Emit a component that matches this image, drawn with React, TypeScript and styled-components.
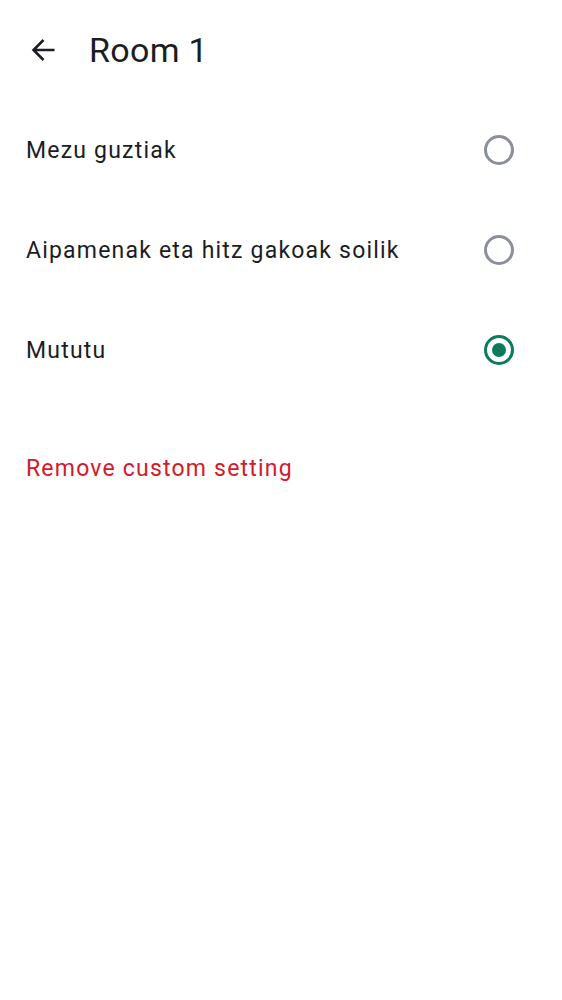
import React from "react";
import styled, { createGlobalStyle } from "styled-components";

const Global = createGlobalStyle`
  html, body { margin: 0; padding: 0; background: #ffffff; }
  body { font-family: Roboto, "Noto Sans", sans-serif; color: #1b1d22; }
`;

const Page = styled.div`
  width: 562px;
  min-height: 1000px;
  background: #ffffff;
  display: flex;
  flex-direction: column;
`;

const TopBar = styled.header`
  height: 100px;
  display: flex;
  align-items: center;
  padding-left: 31px;
  box-sizing: border-box;
`;

const BackButton = styled.button`
  width: 24px;
  height: 24px;
  padding: 0;
  border: none;
  background: none;
  display: flex;
  align-items: center;
  justify-content: center;
  color: #1b1d22;
  margin-right: 34px;
`;

const Title = styled.h1`
  margin: 0;
  font-size: 34px;
  font-weight: 400;
  letter-spacing: 0.3px;
  line-height: 1;
  color: #1b1d22;
`;

const List = styled.div`
  display: flex;
  flex-direction: column;
`;

const Row = styled.label`
  height: 100px;
  display: flex;
  align-items: center;
  justify-content: space-between;
  padding: 0 48px 0 26px;
  box-sizing: border-box;
`;

const RowLabel = styled.span`
  font-size: 23px;
  letter-spacing: 1.2px;
  color: #1b1d22;
`;

const Radio = styled.span<{ $checked?: boolean }>`
  width: 30px;
  height: 30px;
  border-radius: 50%;
  box-sizing: border-box;
  border: 3px solid ${(p) => (p.$checked ? "#0b7b5c" : "#8a9099")};
  display: flex;
  align-items: center;
  justify-content: center;
  &::after {
    content: "";
    width: 14px;
    height: 14px;
    border-radius: 50%;
    background: #0b7b5c;
    display: ${(p) => (p.$checked ? "block" : "none")};
  }
`;

const RemoveLink = styled.button`
  margin-top: 48px;
  align-self: flex-start;
  border: none;
  background: none;
  padding: 0 0 0 26px;
  font-family: Roboto, "Noto Sans", sans-serif;
  font-size: 23px;
  letter-spacing: 1.2px;
  color: #d5192b;
  height: 40px;
`;

const options = [
  { label: "Mezu guztiak", checked: false },
  { label: "Aipamenak eta hitz gakoak soilik", checked: false },
  { label: "Mututu", checked: true },
];

export default function App() {
  return (
    <Page>
      <Global />
      <TopBar>
        <BackButton aria-label="Back">
          <svg width="24" height="24" viewBox="0 0 24 24" fill="none">
            <path
              d="M23.5 12H2.5M12.5 2L2.5 12l10 10"
              stroke="currentColor"
              strokeWidth="2.6"
              strokeLinecap="butt"
            />
          </svg>
        </BackButton>
        <Title>Room 1</Title>
      </TopBar>
      <List>
        {options.map((o) => (
          <Row key={o.label}>
            <RowLabel>{o.label}</RowLabel>
            <Radio $checked={o.checked} />
          </Row>
        ))}
      </List>
      <RemoveLink>Remove custom setting</RemoveLink>
    </Page>
  );
}
